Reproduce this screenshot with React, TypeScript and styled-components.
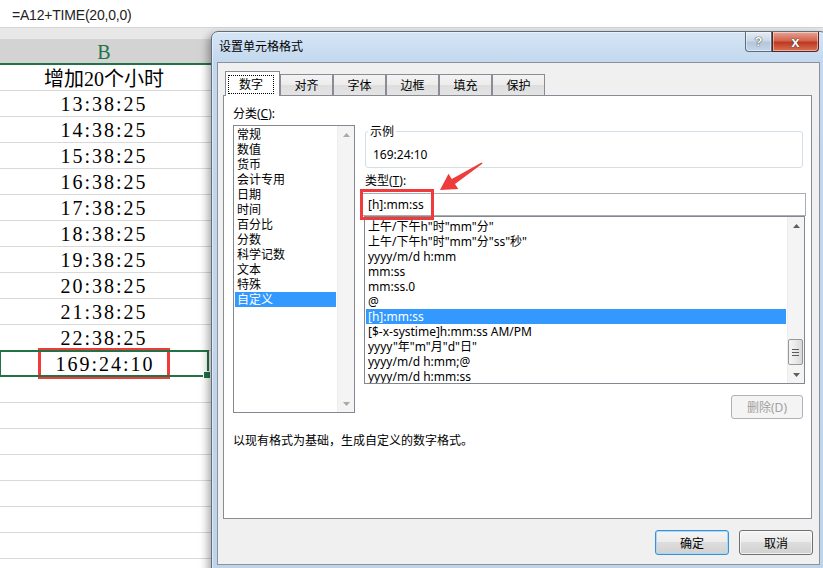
import React from "react";
import styled, { createGlobalStyle } from "styled-components";

const GlobalStyle = createGlobalStyle`
  html, body {
    margin: 0;
    padding: 0;
    background: #fff;
  }
  * {
    box-sizing: border-box;
  }
`;

const RED = "#ef3b3b";
const GREEN = "#217346";

const Screen = styled.div`
  position: relative;
  width: 823px;
  height: 568px;
  overflow: hidden;
  background: #fff;
`;

/* ---------- spreadsheet behind the dialog ---------- */

const Sheet = styled.div`
  display: flex;
  flex-direction: column;
`;

const FormulaBar = styled.div`
  height: 28px;
  display: flex;
  align-items: center;
  padding: 2px 0 0 12px;
  border-bottom: 1px solid #d6d6d6;
  font-family: "Liberation Sans", Arial, sans-serif;
  font-size: 14px;
  letter-spacing: -0.2px;
  color: #222;
`;

const Band = styled.div`
  height: 11px;
  background: #e8e8e8;
`;

const HeaderRow = styled.div`
  display: flex;
  height: 26px;
  background: #d3d3d3;
  border-bottom: 2px solid ${GREEN};
`;

const HeaderCell = styled.div`
  width: 208px;
  display: flex;
  align-items: center;
  justify-content: center;
  padding-top: 2px;
  font-family: "Liberation Serif", "Times New Roman", serif;
  font-size: 20px;
  color: ${GREEN};
`;

const Row = styled.div`
  display: flex;
  height: 26px;
  border-bottom: 1px solid #d9d9d9;
`;

const Cell = styled.div<{ $selected?: boolean }>`
  position: relative;
  width: 208px;
  display: flex;
  align-items: center;
  justify-content: center;
  padding-top: 2px;
  font-family: "Liberation Serif", "Noto Sans CJK SC", serif;
  font-size: 20px;
  letter-spacing: 2px;
  color: #000;
  outline: ${(p) => (p.$selected ? `2px solid ${GREEN}` : "none")};
  outline-offset: -1px;

  &::after {
    content: "";
    display: ${(p) => (p.$selected ? "block" : "none")};
    position: absolute;
    right: -3px;
    bottom: -3px;
    width: 6px;
    height: 6px;
    background: ${GREEN};
    border: 1px solid #fff;
  }
`;

const TitleText = styled.span`
  letter-spacing: 0;
  margin-top: -2px;
`;

const RedBox = styled.span`
  display: inline-flex;
  align-items: center;
  height: 31px;
  margin-top: -2px;
  padding: 2px 12px 0 14px;
  border: 3px solid ${RED};
`;

/* ---------- dialog window ---------- */

const Dialog = styled.div`
  position: absolute;
  left: 211px;
  top: 31px;
  width: 616px;
  height: 542px;
  display: flex;
  flex-direction: column;
  border: 1px solid #5f6d7c;
  border-radius: 7px 7px 0 0;
  background: linear-gradient(180deg, #d5e5f6 0px, #c3d8ee 30px, #bed4eb 100%);
  box-shadow: -3px 3px 8px rgba(0, 0, 0, 0.35),
    inset 0 0 0 1px rgba(255, 255, 255, 0.5);
  font-family: "Noto Sans", "Noto Sans CJK SC", sans-serif;
  font-size: 12px;
  color: #000;
`;

const TitleBar = styled.div`
  height: 30px;
  display: flex;
  align-items: flex-start;
  padding-left: 7px;
`;

const Title = styled.div`
  flex: 1;
  line-height: 30px;
`;

const Captions = styled.div`
  display: flex;
  margin-right: 7px;
`;

const CaptionButton = styled.div<{ $close?: boolean }>`
  width: ${(p) => (p.$close ? 47 : 27)}px;
  height: 20px;
  display: flex;
  align-items: center;
  justify-content: center;
  border: 1px solid ${(p) => (p.$close ? "#5d2218" : "#5b6b7d")};
  border-top: none;
  border-radius: ${(p) => (p.$close ? "0 0 4px 0" : "0 0 0 4px")};
  background: ${(p) =>
    p.$close
      ? "linear-gradient(180deg, #e7a393 0%, #d2654f 45%, #c0381f 55%, #d4735a 100%)"
      : "linear-gradient(180deg, #e4ecf5 0%, #cbd8e7 45%, #b4c6da 55%, #c6d6e8 100%)"};
  box-shadow: inset 0 0 0 1px rgba(255, 255, 255, 0.45);
  color: #fff;
  font-family: "Liberation Sans", Arial, sans-serif;
  font-weight: bold;
  font-size: ${(p) => (p.$close ? 15 : 13)}px;
  text-shadow: 0 0 1px #2b2b2b, 0 0 1px #2b2b2b;
`;

const Client = styled.div`
  flex: 1;
  display: flex;
  flex-direction: column;
  margin: 0 6px 7px 5px;
  padding: 8px 7px 0 5px;
  border: 1px solid #8a929c;
  background: #f0f0f0;
`;

const TabsRow = styled.div`
  position: relative;
  z-index: 1;
  display: flex;
  align-items: flex-end;
  height: 25px;
  margin: 0 0 -1px 2px;
`;

const Tab = styled.div<{ $active?: boolean }>`
  width: ${(p) => (p.$active ? 55 : 53)}px;
  height: ${(p) => (p.$active ? 25 : 21)}px;
  margin-bottom: ${(p) => (p.$active ? 0 : 1)}px;
  display: flex;
  align-items: stretch;
  justify-content: stretch;
  border: 1px solid #898c95;
  border-bottom: none;
  background: ${(p) =>
    p.$active
      ? "#fff"
      : "linear-gradient(180deg, #f3f3f3 0%, #ececec 50%, #dedede 51%, #e4e4e4 100%)"};
`;

const TabLabel = styled.span<{ $focus?: boolean }>`
  flex: 1;
  display: flex;
  align-items: center;
  justify-content: center;
  margin: ${(p) => (p.$focus ? "3px 5px 2px 2px" : "0")};
  border: ${(p) => (p.$focus ? "1px dotted #000" : "none")};
  line-height: 15px;
`;

const Pane = styled.div`
  height: 424px;
  display: flex;
  flex-direction: column;
  padding: 10px 5px 0 9px;
  border: 1px solid #898c95;
  background: #fff;
`;

const Columns = styled.div`
  display: flex;
  gap: 5px;
`;

const LeftCol = styled.div`
  width: 122px;
  display: flex;
  flex-direction: column;
`;

const RightCol = styled.div`
  flex: 1;
  display: flex;
  flex-direction: column;
`;

const Label = styled.div<{ $indent?: number; $gap?: number }>`
  line-height: 15px;
  height: 15px;
  margin-left: ${(p) => p.$indent ?? 0}px;
  margin-top: ${(p) => p.$gap ?? 0}px;
`;

const ListBox = styled.div<{ $height: number; $gap?: number }>`
  display: flex;
  height: ${(p) => p.$height}px;
  margin-top: ${(p) => p.$gap ?? 0}px;
  border: 1px solid #828790;
  background: #fff;
`;

const ListItems = styled.div<{ $padTop?: number }>`
  flex: 1;
  overflow: hidden;
  padding-top: ${(p) => p.$padTop ?? 0}px;
`;

const ListItem = styled.div<{ $active?: boolean }>`
  margin: 0 1px;
  padding-left: 2px;
  line-height: 15px;
  height: 15px;
  white-space: nowrap;
  background: ${(p) => (p.$active ? "#3399ff" : "transparent")};
  color: ${(p) => (p.$active ? "#fff" : "#000")};
`;

const Scroll = styled.div`
  width: 17px;
  flex: none;
  display: flex;
  flex-direction: column;
  background: #f4f4f4;
  border-left: 1px solid #ededed;
`;

const ScrollArrow = styled.div`
  height: 17px;
  display: flex;
  align-items: center;
  justify-content: center;
`;

const ScrollTrack = styled.div`
  flex: 1;
  display: flex;
  flex-direction: column;
`;

const Thumb = styled.div<{ $offset: number }>`
  margin: ${(p) => p.$offset}px 1px 0 0;
  height: 26px;
  display: flex;
  flex-direction: column;
  align-items: center;
  justify-content: center;
  gap: 2px;
  border: 1px solid #979797;
  border-radius: 2px;
  background: linear-gradient(90deg, #f4f4f4 0%, #e9e9e9 50%, #d8d8d8 100%);
`;

const Grip = styled.span`
  width: 7px;
  height: 1px;
  background: #5a5a5a;
`;

const Example = styled.fieldset`
  margin: 18px 3px 0 5px;
  padding: 8px 7px 5px;
  border: 1px solid #d5dfe5;
  border-radius: 3px;
  min-width: 0;
`;

const Legend = styled.legend`
  padding: 0 2px;
  margin-left: -5px;
  line-height: 15px;
`;

const ExampleValue = styled.div`
  line-height: 15px;
`;

const TypeInput = styled.div`
  position: relative;
  height: 23px;
  margin-top: 5px;
  padding-left: 7px;
  border: 1px solid #abadb3;
  line-height: 21px;
  background: #fff;
`;

const RedMark = styled.span`
  position: absolute;
  left: -1px;
  top: -5px;
  width: 74px;
  height: 31px;
  border: 3px solid ${RED};
`;

const TypeListWrap = styled.div`
  margin: 0 1px 0 4px;
`;

const DeleteButton = styled.div`
  align-self: flex-end;
  width: 72px;
  height: 24px;
  margin: 11px 3px 0 0;
  display: flex;
  align-items: center;
  justify-content: center;
  border: 1px solid #adb2b5;
  border-radius: 3px;
  background: #f4f4f4;
  color: #a0a0a0;
`;

const Description = styled.div`
  margin-top: 14px;
  line-height: 15px;
`;

const Footer = styled.div`
  display: flex;
  justify-content: flex-end;
  gap: 10px;
  margin: 11px -1px 0 0;
`;

const DialogButton = styled.div<{ $primary?: boolean }>`
  width: 74px;
  height: 25px;
  display: flex;
  align-items: center;
  justify-content: center;
  border: 1px solid ${(p) => (p.$primary ? "#3c8fd3" : "#707070")};
  border-radius: 3px;
  background: linear-gradient(
    180deg,
    #f4f4f4 0%,
    #ebebeb 49%,
    #dddddd 50%,
    #d1d1d1 100%
  );
  box-shadow: ${(p) =>
    p.$primary
      ? "inset 0 0 0 1px #a6d9f4"
      : "inset 0 0 0 1px rgba(255,255,255,0.7)"};
`;

const Arrow = styled.svg`
  position: absolute;
  left: 430px;
  top: 155px;
`;

const ArrowGlyph = ({ up, dim }: { up?: boolean; dim?: boolean }) => (
  <svg width="7" height="4" viewBox="0 0 7 4">
    <path
      d={up ? "M0 4 L3.5 0 L7 4 Z" : "M0 0 L3.5 4 L7 0 Z"}
      fill={dim ? "#a9a9a9" : "#606060"}
    />
  </svg>
);

const ScrollBar = ({
  thumbOffset,
  dim,
}: {
  thumbOffset?: number;
  dim?: boolean;
}) => (
  <Scroll>
    <ScrollArrow>
      <ArrowGlyph up dim={dim} />
    </ScrollArrow>
    <ScrollTrack>
      {thumbOffset !== undefined && (
        <Thumb $offset={thumbOffset}>
          <Grip />
          <Grip />
          <Grip />
        </Thumb>
      )}
    </ScrollTrack>
    <ScrollArrow>
      <ArrowGlyph dim={dim} />
    </ScrollArrow>
  </Scroll>
);

const times = [
  "13:38:25",
  "14:38:25",
  "15:38:25",
  "16:38:25",
  "17:38:25",
  "18:38:25",
  "19:38:25",
  "20:38:25",
  "21:38:25",
  "22:38:25",
];

const tabs = ["数字", "对齐", "字体", "边框", "填充", "保护"];

const categories = [
  "常规",
  "数值",
  "货币",
  "会计专用",
  "日期",
  "时间",
  "百分比",
  "分数",
  "科学记数",
  "文本",
  "特殊",
  "自定义",
];

const formats = [
  '上午/下午h"时"mm"分"',
  '上午/下午h"时"mm"分"ss"秒"',
  "yyyy/m/d h:mm",
  "mm:ss",
  "mm:ss.0",
  "@",
  "[h]:mm:ss",
  "[$-x-systime]h:mm:ss AM/PM",
  'yyyy"年"m"月"d"日"',
  "yyyy/m/d h:mm;@",
  "yyyy/m/d h:mm:ss",
];

export default function App() {
  return (
    <Screen>
      <GlobalStyle />
      <Sheet>
        <FormulaBar>=A12+TIME(20,0,0)</FormulaBar>
        <Band />
        <HeaderRow>
          <HeaderCell>B</HeaderCell>
        </HeaderRow>
        <Row>
          <Cell>
            <TitleText>增加20个小时</TitleText>
          </Cell>
        </Row>
        {times.map((t) => (
          <Row key={t}>
            <Cell>{t}</Cell>
          </Row>
        ))}
        <Row>
          <Cell $selected>
            <RedBox>169:24:10</RedBox>
          </Cell>
        </Row>
        {Array.from({ length: 8 }).map((_, i) => (
          <Row key={i}>
            <Cell />
          </Row>
        ))}
      </Sheet>

      <Dialog>
        <TitleBar>
          <Title>设置单元格格式</Title>
          <Captions>
            <CaptionButton>?</CaptionButton>
            <CaptionButton $close>x</CaptionButton>
          </Captions>
        </TitleBar>
        <Client>
          <TabsRow>
            {tabs.map((t, i) => (
              <Tab key={t} $active={i === 0}>
                <TabLabel $focus={i === 0}>{t}</TabLabel>
              </Tab>
            ))}
          </TabsRow>
          <Pane>
            <Columns>
              <LeftCol>
                <Label>
                  分类(<u>C</u>):
                </Label>
                <ListBox $height={288} $gap={4}>
                  <ListItems $padTop={1}>
                    {categories.map((c) => (
                      <ListItem key={c} $active={c === "自定义"}>
                        {c}
                      </ListItem>
                    ))}
                  </ListItems>
                  <ScrollBar dim />
                </ListBox>
              </LeftCol>
              <RightCol>
                <Example>
                  <Legend>示例</Legend>
                  <ExampleValue>169:24:10</ExampleValue>
                </Example>
                <Label $indent={5} $gap={5}>
                  类型(<u>T</u>):
                </Label>
                <TypeInput>
                  [h]:mm:ss
                  <RedMark />
                </TypeInput>
                <TypeListWrap>
                  <ListBox $height={168}>
                    <ListItems $padTop={2}>
                      {formats.map((f) => (
                        <ListItem key={f} $active={f === "[h]:mm:ss"}>
                          {f}
                        </ListItem>
                      ))}
                    </ListItems>
                    <ScrollBar thumbOffset={105} />
                  </ListBox>
                </TypeListWrap>
                <DeleteButton>删除(D)</DeleteButton>
              </RightCol>
            </Columns>
            <Description>以现有格式为基础，生成自定义的数字格式。</Description>
          </Pane>
          <Footer>
            <DialogButton $primary>确定</DialogButton>
            <DialogButton>取消</DialogButton>
          </Footer>
        </Client>
      </Dialog>

      <Arrow width="60" height="40" viewBox="0 0 60 40">
        <polygon
          points="52.6,8.6 25,28.9 28.3,34 10,35 18.5,18.8 21.8,23.9 51.6,7.4"
          fill={RED}
        />
      </Arrow>
    </Screen>
  );
}
